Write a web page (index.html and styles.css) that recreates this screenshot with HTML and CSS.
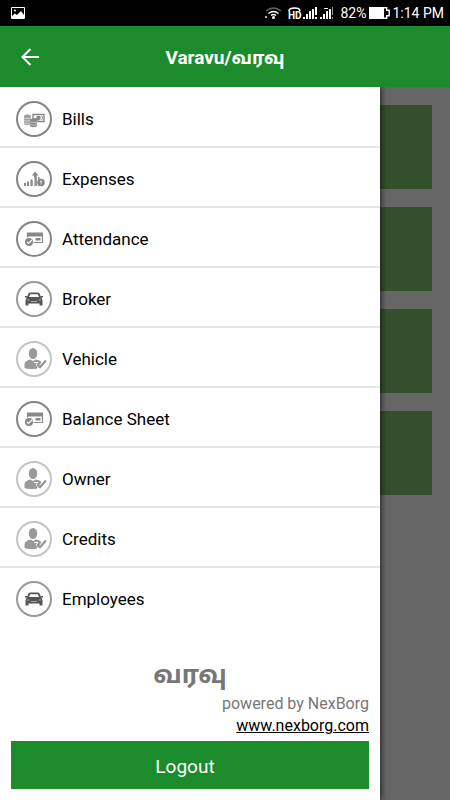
FILE: index.html
```
<!DOCTYPE html>
<html lang="en">
<head>
  <meta charset="UTF-8">
  <meta name="viewport" content="width=device-width, initial-scale=1">
  <title>Varavu</title>
  <link rel="stylesheet" href="styles.css">
</head>
<body>
  <svg class="sprite" aria-hidden="true">
    <symbol id="bills" viewBox="2 2 32 32">
      <path d="M17 13.500h11v7h-6v-2.500h-5z" fill="none" stroke="currentColor" stroke-width="1.400"/>
      <circle cx="22.500" cy="17" r="2.300"/>
      <path d="M25.500 15l1.500 2-1.500 2"  fill="none" stroke="currentColor"/>
      <path d="M8 15c0-2 7-2 7 0v8c0 1.500-7 1.500-7 0z" opacity=".8"/>
      <path d="M14 19c0-2 7-2 7 0v6c0 1.500-7 1.500-7 0z"/>
      <path d="M8 17q3 1.500 7 0M8 19.500q3 1.500 6 0M8 22q3 1.500 6 0M14 21q3.500 1.500 7 0M14 23.500q3.500 1.500 7 0" fill="none" stroke="#fff" stroke-width=".5"/>
    </symbol>
    <symbol id="expenses" viewBox="2 2 32 32">
      <path d="M8 22h2v3H8zM11 20.500h2V25h-2zM14.500 18.500h2.200V25h-2.200zM18.500 15h2.300v10h-2.300zM19 10.500l3.500 4h-2v1.500h-2.500v-1.500h-2zM22 16h1.500v9H22z"/>
      <circle cx="25" cy="21.500" r="3.800"/>
      <path d="M25 19.500v4M24 20.500h2" stroke="#fff" stroke-width=".7" fill="none"/>
    </symbol>
    <symbol id="card" viewBox="2 2 32 32">
      <path d="M11 11.500h16v4H11z"/>
      <path d="M11.500 12v4.500M26.500 13v8.500h-9" fill="none" stroke="currentColor" stroke-width="1.200"/>
      <path d="M19.500 17h5v2.500h-5z"/>
      <circle cx="13" cy="21" r="4"/>
      <path d="M11 21l1.500 1.500 3.500-3.500" fill="none" stroke="#fff" stroke-width="1.200"/>
    </symbol>
    <symbol id="car" viewBox="2 2 32 32">
      <path d="M10.500 17l2-4.500q.5-1 2-1h7q1.500 0 2 1l2 4.500q1 1 1 2.500v5h-3v-2h-11v2h-3v-5q0-1.500 1-2.500z"/>
      <path d="M13 16l1.200-2.800h7.600L23 16z" fill="#fff"/>
      <path d="M9 15h2v1.500H9zM25 15h2v1.500h-2z"/>
      <path d="M11 19h2.500M22.500 19H25M15 20.500h6" stroke="#aaa" fill="none"/>
    </symbol>
    <symbol id="person" viewBox="2 2 32 32">
      <ellipse cx="17" cy="12.500" rx="4.200" ry="5.500"/>
      <path d="M8.500 26.500v-3.500q0-3 6-4.500l2.500 1.500 3-1.500q4 .8 5.500 2.500L22 26q-1 2-3 2-10.500 0-10.500-1.500z"/>
      <path d="M18 21.500h4l-2 2.500 2.500 3" fill="none" stroke="#fff" stroke-width="1"/>
      <path d="M21 23.500l3 2.500 6-6.500" fill="none" stroke="currentColor" stroke-width="2.400"/>
    </symbol>
  </svg>

  <div class="status-bar">
    <svg class="picture" width="14" height="12" viewBox="0 0 14 12" aria-hidden="true">
      <path d="M.5.500h13v11H.5z" fill="none" stroke="#fff"/>
      <path d="M1 11V9l3-2.500 2 1.500 4-4 3 4v3z" fill="#fff"/>
      <circle cx="4" cy="3.500" r="1" fill="#fff"/>
    </svg>
    <svg width="17" height="14" viewBox="0 0 17 14" fill="none" stroke="#fff" stroke-width="1.400" aria-hidden="true">
      <path d="M1 5q7.500-6 15 0" stroke="#666"/>
      <path d="M3.500 7.500q5-4 10 0M6 9.500q2.500-2 5 0"/>
      <circle cx="8.500" cy="11.500" r=".8" fill="#fff"/>
      <path d="M1 10v2"/>
    </svg>
    <span class="volte">
      <svg width="13" height="5" viewBox="0 0 13 5" aria-hidden="true"><path d="M1 4Q1 1 6.500 1T12 4" fill="none" stroke="#fff" stroke-width="1.600"/></svg>
      HD
    </span>
    <svg width="15" height="12" viewBox="0 0 15 12" fill="#fff" aria-hidden="true">
      <path d="M0 10h2v2H0zM3 7h2v5H3zM6 4h2v8H6zM9 2h2v10H9zM12 0h2v8h-2zM12 10h2v2h-2z"/>
    </svg>
    <svg width="15" height="12" viewBox="0 0 15 12" fill="#fff" aria-hidden="true">
      <path d="M0 10h2v2H0zM3 7h2v5H3zM6 4h2v8H6zM9 2h2v10H9zM4 1h4v1H4z"/>
      <path d="M12 0h1v8h-1zM12 10h1v2h-1z" fill="#999"/>
    </svg>
    <span class="percent">82%</span>
    <svg width="21" height="12" viewBox="0 0 21 12" aria-hidden="true">
      <path d="M.7.700h17v2.500h2.500v5.500h-2.500v2.600H.7z" fill="none" stroke="#fff" stroke-width="1.400"/>
      <path d="M1 1h14v10H1z" fill="#fff"/>
    </svg>
    <span class="clock">1:14 PM</span>
  </div>

  <header class="app-bar">
    <button class="back" aria-label="Back">
      <svg width="18" height="18" viewBox="0 0 18 18" fill="none" stroke="#fff" stroke-width="2" aria-hidden="true">
        <path d="M18 9H2M9.500 1L1.500 9l8 8"/>
      </svg>
    </button>
    <h1>Varavu/<span class="tamil" lang="ta">வரவு</span></h1>
  </header>

  <main class="screen">
    <div class="cards">
      <div class="card"></div>
      <div class="card"></div>
      <div class="card"></div>
      <div class="card"></div>
    </div>
    <div class="scrim"></div>

    <aside class="drawer">
      <nav>
        <ul class="menu">
          <li><a href="#"><svg class="icon"><use href="#bills"/></svg>Bills</a></li>
          <li><a href="#"><svg class="icon"><use href="#expenses"/></svg>Expenses</a></li>
          <li><a href="#"><svg class="icon"><use href="#card"/></svg>Attendance</a></li>
          <li><a href="#"><svg class="icon dark"><use href="#car"/></svg>Broker</a></li>
          <li><a href="#"><svg class="icon light"><use href="#person"/></svg>Vehicle</a></li>
          <li><a href="#"><svg class="icon"><use href="#card"/></svg>Balance Sheet</a></li>
          <li><a href="#"><svg class="icon light"><use href="#person"/></svg>Owner</a></li>
          <li><a href="#"><svg class="icon light"><use href="#person"/></svg>Credits</a></li>
          <li><a href="#"><svg class="icon dark"><use href="#car"/></svg>Employees</a></li>
        </ul>
      </nav>
      <footer class="drawer-footer">
        <div class="brand" lang="ta">வரவு</div>
        <div class="powered">powered by NexBorg</div>
        <a class="site" href="#">www.nexborg.com</a>
        <button class="logout">Logout</button>
      </footer>
    </aside>
  </main>
</body>
</html>
```
FILE: styles.css
```
* {
  box-sizing: border-box;
}

body {
  margin: 0;
  min-height: 100vh;
  display: flex;
  flex-direction: column;
  font-family: Roboto, "Noto Sans Tamil", "Noto Sans", sans-serif;
  color: #000;
}

.sprite {
  display: none;
}

/* Status bar */
.status-bar {
  display: flex;
  align-items: center;
  gap: 2px;
  height: 26px;
  padding: 0 6px 0 11px;
  background: #000;
  color: #fff;
  font-size: 14px;
}

.picture {
  margin-right: auto;
}

.volte {
  display: flex;
  flex-direction: column;
  align-items: center;
  margin-left: 4px;
  font-size: 10px;
  font-weight: bold;
  line-height: 8px;
}

.percent {
  margin: 0 1px 0 3px;
}

/* App bar */
.app-bar {
  display: grid;
  grid-template-columns: 60px 1fr 60px;
  align-items: center;
  height: 61px;
  background: #1b8b2b;
  color: #fff;
}

.back {
  display: flex;
  justify-content: center;
  padding: 12px;
  border: none;
  background: none;
}

.app-bar h1 {
  margin: 0;
  padding-top: 2px;
  font-size: 19px;
  line-height: 24px;
  text-align: center;
}

.tamil {
  font-size: 18px;
}

/* Screen behind the drawer */
.screen {
  position: relative;
  flex: 1;
  display: flex;
  background: #fff;
}

.cards {
  position: absolute;
  inset: 0;
  display: flex;
  flex-direction: column;
  gap: 18px;
  padding: 18px;
}

.card {
  height: 84px;
  background: #82c66c;
}

.scrim {
  position: absolute;
  inset: 0;
  background: rgba(0, 0, 0, 0.6);
}

/* Drawer */
.drawer {
  position: relative;
  display: flex;
  flex-direction: column;
  justify-content: space-between;
  width: calc(100% - 70px);
  background: #fff;
  box-shadow: 1px 0 6px rgba(0, 0, 0, 0.7);
  clip-path: inset(0 -12px 0 0);
}

.menu {
  margin: 0;
  padding: 0;
  list-style: none;
}

.menu li {
  border-bottom: 2px solid #e6e6e6;
}

.menu li:last-child {
  border-bottom: none;
}

.menu a {
  display: flex;
  align-items: center;
  gap: 10px;
  height: 58px;
  padding: 4px 16px 0;
  color: #000;
  font-size: 17px;
  text-decoration: none;
}

.menu li:first-child a {
  height: 59px;
}

.icon {
  width: 36px;
  height: 36px;
  border: 2px solid #858585;
  border-radius: 50%;
  color: #888;
  fill: currentColor;
}

.icon.dark {
  border-color: #999;
  color: #555;
}

.icon.light {
  border-color: #c4c4c4;
  color: #999;
}

.drawer-footer {
  display: flex;
  flex-direction: column;
  align-items: flex-end;
  padding: 0 11px 11px;
}

.brand {
  align-self: center;
  color: #777;
  font-size: 25px;
  font-weight: bold;
  line-height: 36px;
}

.powered {
  color: #777;
  font-size: 16px;
  line-height: 22px;
}

.site {
  color: #000;
  font-size: 16px;
  line-height: 22px;
}

.logout {
  width: 100%;
  height: 48px;
  margin-top: 4px;
  padding: 2px 10px 0 0;
  border: none;
  background: #1b8b2b;
  color: #fff;
  font-family: inherit;
  font-size: 19px;
}
```
